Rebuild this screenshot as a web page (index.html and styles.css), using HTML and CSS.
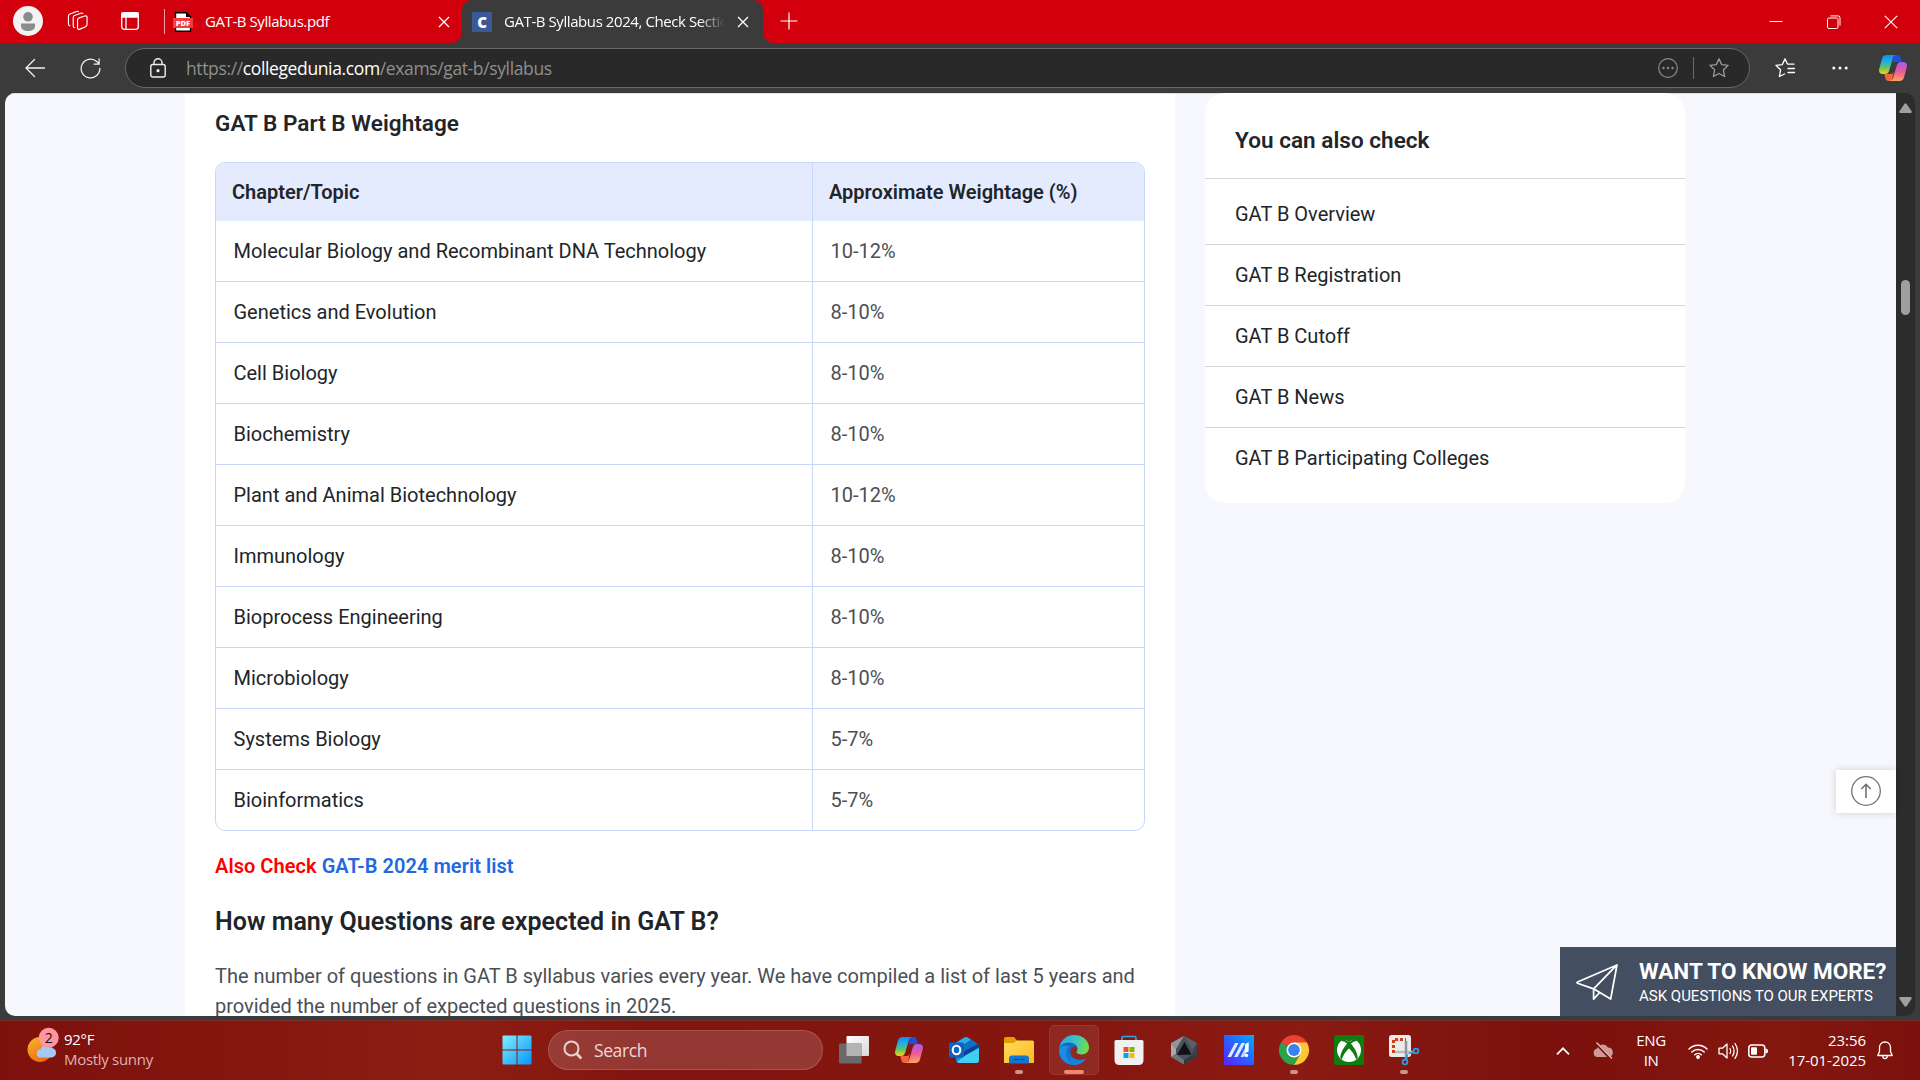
FILE: index.html
```html
<!DOCTYPE html>
<html lang="en">
<head>
<meta charset="utf-8">
<title>GAT-B Syllabus 2024</title>
<link rel="stylesheet" href="styles.css">
</head>
<body>
<svg class="defs" aria-hidden="true">
  <defs>
    <linearGradient id="cpA" x1="0" y1="0" x2="0" y2="1"><stop offset="0" stop-color="#0f8df0"/><stop offset=".35" stop-color="#22b0e0"/><stop offset=".65" stop-color="#5cc46a"/><stop offset="1" stop-color="#f7d20d"/></linearGradient>
    <linearGradient id="cpB" x1="0" y1="0" x2="0" y2="1"><stop offset="0" stop-color="#a45af0"/><stop offset=".5" stop-color="#ee5a96"/><stop offset="1" stop-color="#fda55c"/></linearGradient>
    <symbol id="copilot" viewBox="0 0 28 26">
      <path d="M15 0h3.500c2 0 2.800 1 3.300 2.800L22.700 7H17c-2 0-3 .6-3.600 2.500z" fill="#1f4fd8"/>
      <path d="M13 26H9.500c-2 0-2.600-1-3.100-2.800L5.300 19H11c2 0 3-.6 3.600-2.500z" fill="#f2663a"/>
      <path d="M7.500 0H17c-1.800.3-2.600 1.500-3.200 3.500l-3.600 12c-.7 2.400-2 3.500-4.200 3.500H3.500C.8 19-.4 17 .2 14L3 3.800C3.700 1.200 5 0 7.500 0z" fill="url(#cpA)"/>
      <path d="M20.500 26H11c1.800-.3 2.600-1.500 3.200-3.500l3.600-12c.7-2.400 2-3.500 4.200-3.500h2.500c2.700 0 3.900 2 3.300 5L25 22.200c-.7 2.600-2 3.800-4.500 3.800z" fill="url(#cpB)"/>
    </symbol>
  </defs>
</svg>

<div class="browser">
  <header class="titlebar">
    <div class="tools">
      <svg class="avatar" viewBox="0 0 30 30"><circle cx="15" cy="15" r="15" fill="#f3f3f3"/><circle cx="15" cy="10.800" r="4.800" fill="#8c8c8c"/><path d="M8 17.500h14v2.500c0 3-3 5-7 5s-7-2-7-5z" fill="#8c8c8c"/></svg>
      <svg class="stack" viewBox="0 0 22 22" fill="none" stroke="#fff" stroke-width="1.200" stroke-linejoin="round" stroke-linecap="round"><path d="M11.500 7.500 18 5.200q2.500-.7 2.500 1.800v7q0 1.800-1.500 2.400l-6 2.600q-2.500 1-2.500-1.600V9.500q0-1.500 1-2z"/><path d="M16 2.600q-.5-.8-2-.3L7.300 4.800Q6 5.300 6 7v8.500q0 1.700 1.300 2"/><path d="M11.500.8Q11 0 9.500.500L2.600 3.100Q1 3.700 1 5.300v8q0 1.700 1.300 2.200"/></svg>
      <svg class="panel" viewBox="0 0 18 18" fill="none" stroke="#fff" stroke-width="1.300"><rect x=".7" y=".7" width="16.600" height="16.600" rx="2.500"/><path d="M1 1h16v4H1z" fill="#fff"/><path d="M5 5v12"/></svg>
      <span class="divider"></span>
    </div>
    <div class="tab">
      <svg class="favicon" viewBox="0 0 20 20"><path d="M2.500.7h11l4 4v14.600h-15z" fill="#fff" stroke="#000" stroke-width="1.400"/><path d="M13 0v5h5z"/><rect x="0" y="6" width="20" height="10" fill="#f23a3f"/><text x="10" y="13.800" text-anchor="middle" class="pdf-mark">PDF</text></svg>
      <span class="tab-title">GAT-B Syllabus.pdf</span>
      <svg class="x" viewBox="0 0 12 12"><path d="M1 1l10 10M11 1 1 11" stroke="#fff" stroke-width="1.300"/></svg>
    </div>
    <div class="tab active">
      <span class="favicon c-mark">C</span>
      <span class="tab-title fade">GAT-B Syllabus 2024, Check Section</span>
      <svg class="x" viewBox="0 0 12 12"><path d="M1 1l10 10M11 1 1 11" stroke="#fff" stroke-width="1.300"/></svg>
    </div>
    <svg class="plus" viewBox="0 0 18 18"><path d="M9 .5v17M.5 9h17" stroke="#fff" stroke-width="1.200"/></svg>
    <div class="window-buttons">
      <svg viewBox="0 0 14 14"><path d="M.5 6.500h13" stroke="#fff"/></svg>
      <svg viewBox="0 0 14 14" fill="none" stroke="#fff"><rect x=".5" y="3" width="10.500" height="10.500" rx="1.500"/><path d="M3.500.9h7.500q2 0 2 2V10.500"/></svg>
      <svg viewBox="0 0 14 14"><path d="M.8.8l12.400 12.400M13.200.8.8 13.200" stroke="#fff" stroke-width="1.100"/></svg>
    </div>
  </header>

  <div class="toolbar">
    <svg class="back" viewBox="0 0 20 20" fill="none" stroke="#f2f2f2" stroke-width="1.300" stroke-linecap="round"><path d="M19.500 10H1M9.500 1.500 1 10l8.500 8.500"/></svg>
    <svg class="reload" viewBox="0 0 22 22" fill="none" stroke="#f2f2f2" stroke-width="1.300" stroke-linecap="round"><path d="M20.800 10.800A9.800 9.800 0 1 1 17.500 3.700l2.500 2.300M20 1v5.300h-5.300"/></svg>
    <div class="address">
      <svg class="lock" viewBox="0 0 16 20" fill="none" stroke="#eee" stroke-width="1.400"><rect x=".8" y="6.500" width="14.400" height="12.500" rx="2"/><path d="M4 6.500V4.800a4 4 0 0 1 8 0v1.700"/><circle cx="8" cy="12.700" r=".9" fill="#eee"/></svg>
      <span class="url">https://<b>collegedunia.com</b>/exams/gat-b/syllabus</span>
      <svg class="more" viewBox="0 0 20 20"><circle cx="10" cy="10" r="9.300" fill="none" stroke="#8c8c8c" stroke-width="1.200"/><g fill="#8c8c8c"><circle cx="5.500" cy="10" r="1.200"/><circle cx="10" cy="10" r="1.200"/><circle cx="14.500" cy="10" r="1.200"/></g></svg>
      <span class="sep"></span>
      <svg class="star" viewBox="0 0 20 20" fill="none" stroke="#9a9a9a" stroke-width="1.300" stroke-linejoin="round"><path d="M10 .9l2.700 5.700 6.400.8-4.700 4.400 1.200 6.700L10 15.500l-5.600 3 1.200-6.700L.9 7.400l6.400-.8z"/></svg>
    </div>
    <svg class="favs" viewBox="0 0 20 20" fill="none" stroke="#fff" stroke-width="1.300" stroke-linejoin="round" stroke-linecap="round"><path d="M19 6.200h-6.400L10 .9 7.300 6.600l-6.400.8 4.700 4.400-1.200 6.700L9.500 16"/><path d="M13 10.500h6.500M13 14.500h6.500"/></svg>
    <svg class="dots" viewBox="0 0 16 4" fill="#fff"><circle cx="1.800" cy="2" r="1.500"/><circle cx="8" cy="2" r="1.500"/><circle cx="14.200" cy="2" r="1.500"/></svg>
    <svg class="cop"><use href="#copilot"/></svg>
  </div>

  <div class="viewport">
    <main class="page">
      <article class="content">
        <h3>GAT B Part B Weightage</h3>
        <div class="table">
          <div class="row head"><div>Chapter/Topic</div><div>Approximate Weightage (%)</div></div>
          <div class="row"><div>Molecular Biology and Recombinant DNA Technology</div><div>10-12%</div></div>
          <div class="row"><div>Genetics and Evolution</div><div>8-10%</div></div>
          <div class="row"><div>Cell Biology</div><div>8-10%</div></div>
          <div class="row"><div>Biochemistry</div><div>8-10%</div></div>
          <div class="row"><div>Plant and Animal Biotechnology</div><div>10-12%</div></div>
          <div class="row"><div>Immunology</div><div>8-10%</div></div>
          <div class="row"><div>Bioprocess Engineering</div><div>8-10%</div></div>
          <div class="row"><div>Microbiology</div><div>8-10%</div></div>
          <div class="row"><div>Systems Biology</div><div>5-7%</div></div>
          <div class="row"><div>Bioinformatics</div><div>5-7%</div></div>
        </div>
        <p class="also">Also Check <a>GAT-B 2024 merit list</a></p>
        <h2>How many Questions are expected in GAT B?</h2>
        <p class="body">The number of questions in GAT B syllabus varies every year. We have compiled a list of last 5 years and<br>provided the number of expected questions in 2025.</p>
      </article>
      <aside class="card">
        <h4>You can also check</h4>
        <ul>
          <li>GAT B Overview</li>
          <li>GAT B Registration</li>
          <li>GAT B Cutoff</li>
          <li>GAT B News</li>
          <li>GAT B Participating Colleges</li>
        </ul>
      </aside>
      <div class="to-top"><svg viewBox="0 0 30 30" fill="none" stroke="#6f7177"><circle cx="15" cy="15" r="14.300" stroke-width="1.300"/><path d="M15 22V8.500M10.300 13 15 8.300l4.700 4.700" stroke-width="1.600"/></svg></div>
      <div class="ask">
        <svg viewBox="0 0 44 38" fill="none" stroke="#fff" stroke-width="1.800" stroke-linejoin="round"><path d="M42 1 1.500 18.500q-1 .7 0 1.300L18 25.500 35.500 36zM42 1 18 25.500V36l6-6.500"/></svg>
        <div><strong>WANT TO KNOW MORE?</strong><span>ASK QUESTIONS TO OUR EXPERTS</span></div>
      </div>
    </main>
    <div class="scrollbar">
      <svg viewBox="0 0 13 10"><path d="M5.300 1Q6.500-.5 7.700 1l5 7.500Q13 10 11.500 10h-10Q0 10 .3 8.500z" fill="#9f9f9f"/></svg>
      <span class="thumb"></span>
      <svg viewBox="0 0 13 10"><path d="M5.300 9Q6.500 10.500 7.700 9l5-7.500Q13 0 11.500 0h-10Q0 0 .3 1.500z" fill="#9f9f9f"/></svg>
    </div>
  </div>
</div>

<footer class="taskbar">
  <div class="weather">
    <svg viewBox="0 0 34 36"><defs><linearGradient id="sun" x1="0" y1="0" x2=".6" y2="1"><stop offset="0" stop-color="#f5b92d"/><stop offset="1" stop-color="#f0680f"/></linearGradient></defs><circle cx="14" cy="22.500" r="12.500" fill="url(#sun)"/><path d="M15 30.500a4 4 0 0 1-.5-8 5.500 5.500 0 0 1 10-1.500 4.800 4.800 0 0 1 1.500 9.500z" fill="#a4c8f8"/><circle cx="22.700" cy="10.700" r="10" fill="#ff95a0"/><text x="22.700" y="15.700" text-anchor="middle" class="badge">2</text></svg>
    <div><div>92°F</div><div class="dim">Mostly sunny</div></div>
  </div>

  <div class="apps">
    <div class="app"><svg viewBox="0 0 30 30"><defs><linearGradient id="win" x1="0" y1="0" x2="1" y2="1"><stop offset="0" stop-color="#7df0ff"/><stop offset="1" stop-color="#0a93fb"/></linearGradient></defs><path d="M1.500.500h13v14h-14v-13q0-1 1-1zM15.500.500h13q1 0 1 1v13h-14zM.500 15.500h14v14h-13q-1 0-1-1zM15.500 15.500h14v13q0 1-1 1h-13z" fill="url(#win)"/></svg></div>
    <div class="search"><svg viewBox="0 0 20 20" fill="none" stroke="#e6d3d2" stroke-width="2"><circle cx="8.500" cy="8.500" r="7"/><path d="M13.500 13.500 18.300 18.500" stroke-width="2.600"/></svg><span>Search</span></div>
    <div class="app"><svg viewBox="0 0 30 30"><defs><linearGradient id="tv" x1="0" y1="0" x2="1" y2="1"><stop offset="0" stop-color="#fff"/><stop offset="1" stop-color="#d8d8d8"/></linearGradient></defs><rect x="7.500" y="1" width="22.500" height="20" rx="1" fill="url(#tv)"/><rect x="0" y="8.500" width="22.500" height="20" rx="1" fill="#6a6a6a"/><rect x="7.500" y="8.500" width="15" height="12.500" fill="#b4b4b4"/></svg></div>
    <div class="app"><svg class="cop"><use href="#copilot"/></svg></div>
    <div class="app"><svg viewBox="0 0 30 30"><path d="M5 8.500 15.500 2.400Q17 1.600 18.500 2.400L28 8.500q2 1.300 2 3.500v13q0 3-3 3H10q-3 0-3-3z" fill="#1385d3"/><path d="M6 8.500 15.500 2.400Q17 1.600 18.500 2.400L22 4.700 12 11z" fill="#2fa9ea"/><path d="M14 10.500 22 4.700 28 8.500l-12 8z" fill="#0d6fc8"/><path d="M14 17 29 8.800Q30 10 30 12L15 22z" fill="#0c3f96"/><path d="M30 13V25q0 3-3 3H11q-2 0-3-1.500L17 20z" fill="#42cdf3"/><rect x="0" y="7.500" width="15" height="15" rx="1.500" fill="#0a64c2"/><ellipse cx="7.500" cy="15" rx="3.800" ry="4.300" fill="none" stroke="#fff" stroke-width="2.100"/></svg></div>
    <div class="app run"><svg viewBox="0 0 30 30"><defs><linearGradient id="fold" x1="0" y1="0" x2="1" y2="1"><stop offset="0" stop-color="#ffdc5e"/><stop offset="1" stop-color="#fbb91d"/></linearGradient></defs><path d="M0 3.500Q0 2 1.500 2H10l3.500 4v5H0z" fill="#e0a000"/><path d="M0 8h9.500L13 5.500h15.500Q30 5.500 30 7v21H0z" fill="url(#fold)"/><path d="M5 28.500v-5q0-3 3-3h14q3 0 3 3v5z" fill="#0f78d0"/><path d="M9.500 24.500h11" stroke="#064f95" stroke-width="1.300"/></svg></div>
    <div class="app on"><svg viewBox="0 0 30 30"><defs><linearGradient id="ed1" x1="0" y1=".2" x2="1" y2=".4"><stop offset="0" stop-color="#23a7e0"/><stop offset=".5" stop-color="#35c1d0"/><stop offset="1" stop-color="#71dd45"/></linearGradient><linearGradient id="ed2" x1="0" y1="0" x2=".6" y2="1"><stop offset="0" stop-color="#0f5cc0"/><stop offset="1" stop-color="#1488dc"/></linearGradient></defs><path d="M0 15C.5 6 7 0 15 0c9 0 15 6 15 12.500 0 4-3 7-7 7-3 0-5.500-1.200-5.500-2.500 0-.8 1-1.300 1-3 0-3-3-5.500-6.500-5.500C6 8.500.8 12 0 15z" fill="url(#ed1)"/><path d="M0 15c.5-4.500 4.500-7.500 10-7.500 5 0 8.500 3 8.500 6.500 0-2-2-3-4-2-3 1-4 4-2.500 7.500 2 5 8.500 7 15 4C24.500 27.500 20.500 30 15 30 6.500 30-.5 23.500 0 15z" fill="url(#ed2)"/><path d="M10.500 11.500C6 15 6 23 12 29.600 5 28 0 22 0 15c2-4.500 6-5.500 10.500-3.500z" fill="#1a8de0"/></svg></div>
    <div class="app"><svg viewBox="0 0 30 30"><path d="M8 6.500V3q0-1.500 1.500-1.500h11Q22 1.500 22 3v3.500" fill="none" stroke="#2aa8e8" stroke-width="1.700"/><path d="M.500 6.500q0-1.500 1.500-1.500h26q1.500 0 1.500 1.500V25q0 5-5 5h-19q-5 0-5-5z" fill="#f1f1f1"/><path d="M9.500 12h5v5h-5z" fill="#f25022"/><path d="M15.500 12h5v5h-5z" fill="#7fba00"/><path d="M9.500 18h5v5h-5z" fill="#00a4ef"/><path d="M15.500 18h5v5h-5z" fill="#ffb900"/></svg></div>
    <div class="app"><svg viewBox="0 0 30 30"><path d="M15 1 28 8v14l-13 7.500L2 22V8z" fill="#4b5157"/><path d="M15 1 2 8l5 6z" fill="#8f959b"/><path d="M2 8v14l5-3V14z" fill="#a4aab0"/><path d="M15 1l13 7-5 6z" fill="#5a6067"/><path d="M28 8v14l-5-2z" fill="#3c4147"/><path d="M2 22l13 7.500V25l-8-6z" fill="#6d747a"/><path d="M15 29.500 28 22l-5-2-8 5z" fill="#34383d"/><path d="M15.500 7 22.500 19.500 8 20z" fill="#101316"/></svg></div>
    <div class="app"><svg viewBox="0 0 30 30"><defs><linearGradient id="ma" x1="0" y1="1" x2="1" y2="0"><stop offset="0" stop-color="#5b22ff"/><stop offset=".5" stop-color="#2a62ff"/><stop offset="1" stop-color="#00adff"/></linearGradient></defs><path d="M0 0h30v30H0z" fill="url(#ma)"/><path d="M3.500 22h3.500l7.500-14H11zM10 22h3.500L21 8h-3.500z" fill="#dfeaff"/><path d="M16.500 22h3.500l4.500-8V8h-.8z" fill="#c9dcff"/><path d="M21 9.500 24.500 7v10H21z" fill="#fff"/><circle cx="22.500" cy="20.500" r="1.700" fill="#fff"/></svg></div>
    <div class="app run"><svg viewBox="0 0 30 30"><path d="M15 15 2 7.500A15 15 0 0 1 28 7.500z" fill="#ea4335"/><path d="M15 15 2 7.500A15 15 0 0 0 15 30l6-11z" fill="#2ba24c"/><path d="M15 15V7.500h13A15 15 0 0 1 15 30l6.500-11.500z" fill="#fcc934"/><circle cx="15" cy="15" r="7.500" fill="#fff"/><circle cx="15" cy="15" r="5.900" fill="#3b82ef"/></svg></div>
    <div class="app"><svg viewBox="0 0 30 30"><rect width="30" height="30" rx="2" fill="#107c10"/><circle cx="15" cy="15" r="12" fill="#fff"/><path d="M8 4.500Q12 4 15 7q3-3 7-2.500L20.500 3h-11zM15 7c-2 1.200-8 8-8.800 15.500L8 24.500C9 20 12.500 15.500 15 13.500c2.500 2 6 6.500 7 11l1.800-2C23 15 17 8.200 15 7z" fill="#107c10"/><path d="M7.500 5Q11 5 14 8l1 1 1-1q3-3 6.500-3" fill="none" stroke="#107c10" stroke-width="2"/></svg></div>
    <div class="app run"><svg viewBox="0 0 30 30"><rect width="22" height="22" rx="2.500" fill="#ebebeb"/><path d="M4.500 18V4.500H17" fill="none" stroke="#d23f12" stroke-width="3" stroke-dasharray="3 2"/><path d="M6 17h19" stroke="#b7bcc0" stroke-width="2.500"/><path d="M17 6v19" stroke="#8f979d" stroke-width="2.500"/><circle cx="27" cy="16" r="2.400" fill="none" stroke="#2c9de6" stroke-width="1.700"/><circle cx="16" cy="27" r="2.400" fill="none" stroke="#2c9de6" stroke-width="1.700"/><path d="M17 24.500l1.500-5M24.700 17l-5 1.500" stroke="#2c9de6" stroke-width="1.700"/></svg></div>
  </div>

  <div class="tray">
    <svg class="chev" viewBox="0 0 14 8"><path d="M1 7.300 7 1.300l6 6" fill="none" stroke="#fff" stroke-width="1.700"/></svg>
    <svg class="cloud" viewBox="0 0 20 18"><path d="M4.500 15a4.300 4.300 0 0 1-.3-8.500A6 6 0 0 1 15 5.500a4.800 4.800 0 0 1 1 9.500z" fill="#cf9b99"/><path d="M3 1l15 16" stroke="#80130e" stroke-width="3"/><path d="M3.500.5 19 16.500" stroke="#e6c9c8" stroke-width="1.200"/></svg>
    <div class="lang">ENG<br>IN</div>
    <svg class="wifi" viewBox="0 0 20 16" fill="none" stroke="#fff" stroke-width="1.500" stroke-linecap="round"><path d="M1 6a12.700 12.700 0 0 1 18 0M3.800 9a8.800 8.800 0 0 1 12.400 0M6.700 11.800a4.700 4.700 0 0 1 6.600 0"/><circle cx="10" cy="14" r="1.200" fill="#fff"/></svg>
    <svg class="vol" viewBox="0 0 21 18" fill="none" stroke="#fff" stroke-width="1.300" stroke-linecap="round" stroke-linejoin="round"><path d="M1 6.200h3.500L9 2v14l-4.500-4.200H1zM12 6.500q1.500 2.500 0 5M14.500 4q3.200 5 0 10M17 1.500q5 7.500 0 15"/></svg>
    <svg class="bat" viewBox="0 0 20 14"><rect x=".8" y="1" width="16" height="12" rx="3" fill="none" stroke="#fff" stroke-width="1.500"/><rect x="3" y="3.200" width="6" height="7.600" rx="1" fill="#fff"/><path d="M17.500 4.500q2.500 0 2.500 2.500t-2.500 2.500z" fill="#fff"/></svg>
    <div class="clock">23:56<br>17-01-2025</div>
    <svg class="bell" viewBox="0 0 16 19" fill="none" stroke="#fff" stroke-width="1.300" stroke-linejoin="round"><path d="M8 1C4.500 1 2.500 3.500 2.500 6.500v4L.8 14.500h14.400l-1.700-4v-4C13.500 3.500 11.500 1 8 1zM5.700 15c.3 3.500 4.300 3.500 4.600 0"/></svg>
  </div>
</footer>
</body>
</html>
```
FILE: styles.css
```css
* { box-sizing: border-box; }
body { margin: 0; width: 1920px; height: 1080px; overflow: hidden; display: flex; flex-direction: column; background: #3b3b3b; font-family: "Open Sans", "Noto Sans", sans-serif; font-size: 15px; }
svg { display: block; flex: none; overflow: visible; }
.defs { position: absolute; width: 0; height: 0; }
.browser { height: 1020px; display: flex; flex-direction: column; background: #3b3b3b; }

/* Tab strip */
.titlebar { height: 43px; background: #d2000d; display: flex; color: #fff; }
.tools { width: 165px; height: 43px; display: flex; align-items: flex-start; }
.avatar { width: 30px; height: 30px; margin: 6px 0 0 13px; }
.stack { width: 22px; height: 21px; margin: 11px 0 0 24px; }
.panel { width: 18px; height: 18px; margin: 12px 0 0 32px; }
.divider { width: 1px; height: 25px; margin: 9px 0 0 25px; background: #f0a0a4; }
.tab { width: 297px; height: 43px; display: flex; align-items: center; padding: 0 12px 0 8px; }
.favicon { width: 20px; height: 20px; flex: none; }
.pdf-mark { font: 800 7.500px "Open Sans", sans-serif; fill: #fff; }
.tab-title { flex: 1; margin-left: 12px; white-space: nowrap; overflow: hidden; letter-spacing: -.42px; line-height: 22px; margin-top: -2px; }
.x { width: 12px; height: 12px; margin-left: 12px; }
.tab.active { position: relative; width: 301px; background: #3b3b3b; border-radius: 10px 10px 0 0; padding-left: 10px; padding-right: 14px; }
.tab.active::before, .tab.active::after { content: ""; position: absolute; bottom: 0; width: 10px; height: 10px; }
.tab.active::before { left: -10px; background: radial-gradient(circle at 0 0, transparent 9.500px, #3b3b3b 10px); }
.tab.active::after { right: -10px; background: radial-gradient(circle at 100% 0, transparent 9.500px, #3b3b3b 10px); }
.c-mark { background: #3b5998; font: 800 15px/20px "Open Sans", sans-serif; text-align: center; }
.fade { -webkit-mask-image: linear-gradient(90deg, #000 88%, transparent 100%); mask-image: linear-gradient(90deg, #000 88%, transparent 100%); }
.plus { width: 18px; height: 18px; margin: 12px 0 0 17px; }
.window-buttons { margin-left: auto; display: flex; gap: 43.500px; padding: 14.500px 22px 0 0; }
.window-buttons svg { width: 14px; height: 14px; }

/* Toolbar */
.toolbar { height: 50px; display: flex; align-items: center; }
.back { width: 20px; height: 20px; margin: -1px 0 0 25px; }
.reload { width: 21px; height: 21px; margin-left: 35px; }
.address { width: 1625px; height: 40px; margin-left: 24px; border: 1px solid #686868; border-radius: 20px; background: #292929; display: flex; align-items: center; padding: 0 20px 0 24px; }
.lock { width: 16px; height: 20px; margin-top: -1px; }
.url { flex: 1; margin-left: 20px; margin-top: -1px; font-size: 17.500px; color: #8f8f8f; letter-spacing: -.37px; white-space: nowrap; }
.url b { font-weight: 400; color: #fff; }
.more { width: 20px; height: 20px; }
.sep { width: 1px; height: 22px; margin: 0 15px; background: #6a6a6a; }
.star { width: 20px; height: 20px; }
.favs { width: 20px; height: 20px; margin-left: 25px; }
.dots { width: 16px; height: 4px; margin: 0 31px 0 37px; }
.cop { width: 28px; height: 26px; }

/* Web page */
.viewport { width: 1910px; height: 923px; margin-left: 5px; display: flex; border-radius: 10px; overflow: hidden; font-family: Roboto, sans-serif; color: #212529; }
.page { position: relative; width: 1891px; display: flex; align-items: flex-start; padding-left: 180px; gap: 30px; background: #f6f8fd; box-shadow: inset 0 1px #ddd; }
.content { width: 990px; height: 923px; background: #fff; padding: 15px 30px 0; border-top: 1px solid #e2e2e2; }
h2, h3, h4, p, ul { margin: 0; padding: 0; }
h3 { font-size: 22.500px; line-height: 28px; font-weight: 600; letter-spacing: .04px; }
.table { margin-top: 25px; width: 930px; border: 1px solid #c7d8fa; border-radius: 10px; overflow: hidden; font-size: 20px; }
.row { display: grid; grid-template-columns: 596px 332px; height: 61px; }
.row div { display: flex; align-items: center; padding-left: 17.500px; border-bottom: 1px solid #c7d8fa; }
.row div:last-child { border-left: 1px solid #c7d8fa; color: #4b4f56; }
.row.head { height: 58px; background: #e4ebff; font-weight: 600; }
.row.head div { border-bottom: 0; padding-left: 16px; }
.row.head div:last-child { color: #212529; }
.row:last-child { height: 60px; }
.row:last-child div { border-bottom: 0; }
.also { margin-top: 20px; font-size: 20px; line-height: 30px; font-weight: 600; color: #f00; letter-spacing: .05px; }
.also a { color: #2268df; }
h2 { margin-top: 25px; font-size: 25px; line-height: 32px; font-weight: 600; letter-spacing: .03px; }
.body { margin-top: 23px; font-size: 20px; line-height: 30px; color: #4b4f56; white-space: nowrap; }
.card { width: 480px; height: 410px; background: #fff; border-radius: 20px; }
.card h4 { height: 86px; border-bottom: 1px solid #d6d6d6; padding: 33px 30px 0; font-size: 22.500px; line-height: 28px; font-weight: 600; letter-spacing: .04px; }
.card ul { list-style: none; padding-top: 5px; }
.card li { height: 61px; padding: 0 30px; font-size: 20px; line-height: 60px; border-bottom: 1px solid #d6d6d6; }
.card li:last-child { border-bottom: 0; }
.to-top { position: absolute; right: 0; top: 677px; width: 60px; height: 43px; background: #fff; box-shadow: 0 0 8px rgba(0,0,0,.16); display: flex; align-items: flex-start; justify-content: center; padding-top: 6px; }
.to-top svg { width: 30px; height: 30px; }
.ask { position: absolute; right: 0; bottom: 0; width: 336px; height: 69px; background: #434e61; color: #fff; display: flex; align-items: flex-start; padding: 17px 0 0 16px; white-space: nowrap; }
.ask svg { width: 43px; height: 37px; margin-right: 20px; }
.ask strong { display: block; font-size: 22.500px; line-height: 28px; margin-top: -7px; font-weight: 700; }
.ask span { display: block; font-size: 15px; line-height: 20px; margin-top: 1px; }
.scrollbar { width: 19px; background: #2c2c2c; display: flex; flex-direction: column; align-items: center; padding: 10px 0 9px; }
.scrollbar svg { width: 13px; height: 10px; }
.thumb { width: 9px; height: 35px; margin: 167px 0 auto; border-radius: 5px; background: #9f9f9f; }

/* Taskbar */
.taskbar { height: 60px; border-top: 1px solid #78302c; color: #fff; background: linear-gradient(90deg, #7e110c 0, #84150f 220px, #8d1e14 450px, #82150f 640px, #84160f 1000px, #8a1a12 1300px, #7b100c 1560px, #84170f 1780px, #7c110d 1920px); display: flex; position: relative; }
.weather { width: 492px; display: flex; align-items: flex-start; padding-left: 26px; line-height: 20px; }
.weather svg { width: 34px; height: 36px; margin-top: 6px; }
.weather > div { margin: 8px 0 0 4px; letter-spacing: -.3px; }
.badge { font: 14px "Open Sans", sans-serif; fill: #111; }
.dim { color: #dcb3b1; }
.apps { display: flex; gap: 5px; padding-top: 4px; height: 54px; }
.app { position: relative; width: 50px; height: 50px; border-radius: 5px; display: flex; align-items: center; justify-content: center; }
.app svg { width: 30px; height: 30px; }
.app svg.cop { width: 28px; height: 26px; }
.app.on { background: rgba(255,255,255,.08); box-shadow: inset 0 0 0 1px rgba(255,255,255,.07); }
.app.run::after, .app.on::after { content: ""; position: absolute; bottom: 1px; left: 21px; width: 8px; height: 4px; border-radius: 2px; background: #c89594; }
.app.on::after { left: 15px; width: 20px; background: #f7866a; }
.search { width: 275px; height: 40px; margin: 5px 1px 0; border-radius: 20px; border: 1px solid rgba(255,255,255,.15); background: rgba(255,255,255,.15); display: flex; align-items: center; padding-left: 14px; font-size: 17.500px; color: #ecd9d8; }
.search svg { width: 20px; height: 20px; }
.search span { margin-left: 11px; letter-spacing: -.4px; }
.tray { margin-left: auto; display: flex; align-items: center; line-height: 20px; padding-right: 27px; }
.chev { width: 14px; height: 8px; }
.cloud { width: 20px; height: 18px; margin-left: 23px; }
.lang { width: 36px; margin: -2px 0 0 20px; text-align: center; letter-spacing: -.4px; }
.wifi { width: 20px; height: 16px; margin-left: 19px; }
.vol { width: 21px; height: 18px; margin-left: 10px; }
.bat { width: 20px; height: 14px; margin-left: 9px; }
.clock { width: 98px; margin-top: -2px; text-align: right; letter-spacing: -.05px; }
.bell { width: 16px; height: 19px; margin-left: 11px; }
```
